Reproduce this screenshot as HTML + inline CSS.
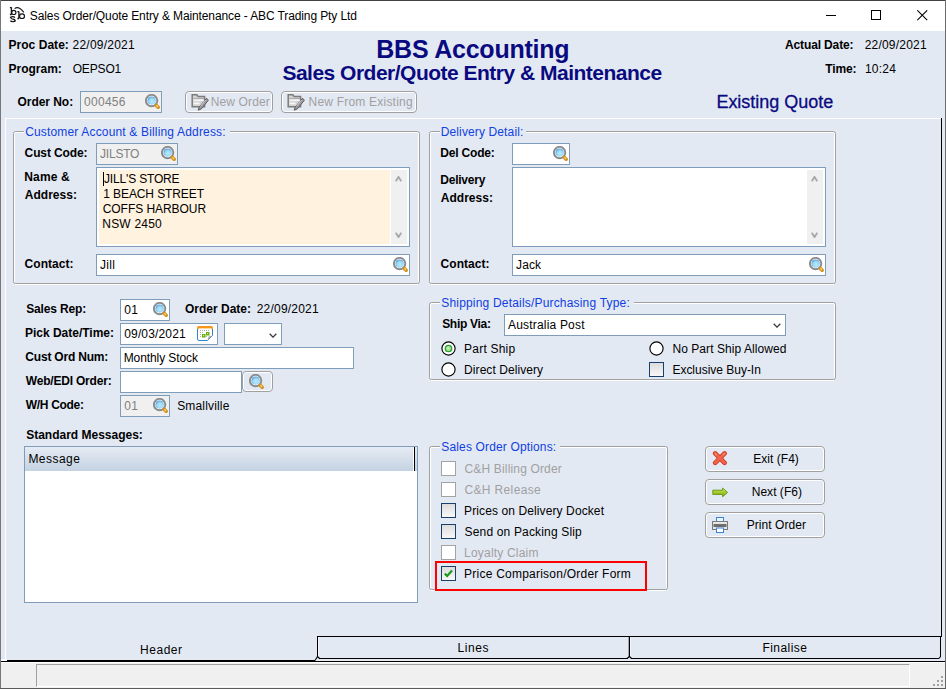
<!DOCTYPE html><html><head><meta charset="utf-8"><style>
html,body{margin:0;padding:0;width:946px;height:689px;overflow:hidden;background:#e3e9f3}
body{position:relative;font-family:"Liberation Sans",sans-serif}
div,span,svg{position:absolute}
.t{white-space:nowrap;line-height:20px}
</style></head><body>
<svg width="0" height="0" style="left:0;top:0"><defs>
<radialGradient id="mg" cx="0.55" cy="0.6" r="0.65"><stop offset="0" stop-color="#b8ecfc"/><stop offset="0.55" stop-color="#9ad8f6"/><stop offset="1" stop-color="#3d92dc"/></radialGradient>
<radialGradient id="rg" cx="0.45" cy="0.45" r="0.6"><stop offset="0" stop-color="#d8f0d0"/><stop offset="1" stop-color="#7ccc70"/></radialGradient>
<g id="mag">
<circle cx="6.6" cy="6.6" r="5.7" fill="#fff" stroke="#8a8a8a" stroke-width="1.9"/>
<circle cx="6.6" cy="6.6" r="4.1" fill="url(#mg)"/>
<path d="M11.4 11.4 L13.2 13.2" stroke="#d4901e" stroke-width="3.6" stroke-linecap="round"/>
<path d="M11.8 11.8 L12.6 12.6" stroke="#ffd86a" stroke-width="1.4" stroke-linecap="round"/>
</g>
</defs></svg>

<div style="left:0px;top:0px;width:946px;height:31px;background:#fff"></div>
<div style="left:0px;top:0px;width:946px;height:1px;background:#424242"></div>
<div style="left:0px;top:0px;width:1px;height:689px;background:#787878"></div>
<div style="left:945px;top:0px;width:1px;height:689px;background:#6a6a6a"></div>
<div style="left:0px;top:688px;width:946px;height:1px;background:#5a5a5a"></div>
<span class="t" style="left:29.86px;top:6px;font-size:12px;font-weight:normal;color:#000;letter-spacing:-0.112px;">Sales Order/Quote Entry &amp; Maintenance - ABC Trading Pty Ltd</span>
<div style="left:826px;top:15px;width:10px;height:1px;background:#000"></div>
<div style="left:871px;top:10px;width:10px;height:10px;border:1px solid #000;box-sizing:border-box"></div>
<svg style="left:917px;top:10px" width="11" height="11"><path d="M0.3 0.3 L10.2 10.2 M10.2 0.3 L0.3 10.2" stroke="#000" stroke-width="1.05"/></svg>
<svg style="left:0px;top:0px" width="30" height="26" viewBox="0 0 30 26">
<g fill="none" stroke="#151515">
<path d="M11.4 7.3 V14.6 M9.9 7.6 H11.6 M9.9 14.5 H11.6" stroke-width="1.3"/>
<ellipse cx="13.8" cy="12.4" rx="2.1" ry="2.1" stroke-width="1.2"/>
<path d="M18.9 11.4 V18.6 M17.4 11.7 H19.1 M17.4 18.5 H19.1" stroke-width="1.3"/>
<ellipse cx="22" cy="16.2" rx="2.5" ry="2.3" stroke-width="1.2"/>
<path d="M14.6 8.6 Q18.5 5.6 23.8 12.4" stroke-width="1.1"/>
<path d="M15 17.6 Q14 16.6 12.6 16.7 Q10.6 16.9 11 18.3 Q11.5 19.1 13 19.2 Q15 19.4 15.1 20.4 Q15 21.7 12.8 21.7 Q11 21.7 10.4 20.6" stroke-width="1.2"/>
<path d="M10.4 16.6 V18 M15.1 20.2 V21.7" stroke-width="0.9"/>
</g>
</svg>
<span class="t" style="left:8.50px;top:35px;font-size:12px;font-weight:bold;color:#000;letter-spacing:0.038px;">Proc Date:</span>
<span class="t" style="left:72.60px;top:35px;font-size:12px;font-weight:normal;color:#000;letter-spacing:0.215px;">22/09/2021</span>
<span class="t" style="left:8.50px;top:59px;font-size:12px;font-weight:bold;color:#000;">Program:</span>
<span class="t" style="left:72.63px;top:59px;font-size:12px;font-weight:normal;color:#000;letter-spacing:-0.136px;">OEPSO1</span>
<span class="t" style="left:376.23px;top:39px;font-size:25px;font-weight:bold;color:#0a0a80;letter-spacing:-0.221px;">BBS Accounting</span>
<span class="t" style="left:282.40px;top:63px;font-size:21px;font-weight:bold;color:#0a0a80;letter-spacing:-0.506px;">Sales Order/Quote Entry &amp; Maintenance</span>
<span class="t" style="left:785.00px;top:35px;font-size:12px;font-weight:bold;color:#000;letter-spacing:-0.133px;">Actual Date:</span>
<span class="t" style="left:864.70px;top:35px;font-size:12px;font-weight:normal;color:#000;letter-spacing:0.203px;">22/09/2021</span>
<span class="t" style="left:825.27px;top:59px;font-size:12px;font-weight:bold;color:#000;letter-spacing:-0.129px;">Time:</span>
<span class="t" style="left:864.89px;top:59px;font-size:12px;font-weight:normal;color:#000;letter-spacing:0.259px;">10:24</span>
<span class="t" style="left:17.51px;top:92px;font-size:12px;font-weight:bold;color:#000;letter-spacing:-0.045px;">Order No:</span>
<div style="left:80px;top:91px;width:82px;height:22px;background:#f0f0f0;border:1px solid #7f9db9;box-sizing:border-box"></div>
<span class="t" style="left:83.93px;top:92px;font-size:12px;font-weight:normal;color:#808080;letter-spacing:0.311px;">000456</span>
<svg style="left:145px;top:94px" width="16" height="16"><use href="#mag"/></svg>
<div style="left:185px;top:91px;width:88px;height:22px;border:1px solid #a0a0a0;border-radius:4px;box-sizing:border-box;box-shadow:inset 0 0 0 1px #fff"></div>
<span class="t" style="left:210.72px;top:92px;font-size:12px;font-weight:normal;color:#a0a0a0;letter-spacing:0.134px;">New Order</span>
<div style="left:281px;top:91px;width:136px;height:22px;border:1px solid #a0a0a0;border-radius:4px;box-sizing:border-box;box-shadow:inset 0 0 0 1px #fff"></div>
<span class="t" style="left:308.52px;top:92px;font-size:12px;font-weight:normal;color:#a0a0a0;letter-spacing:0.211px;">New From Existing</span>
<span class="t" style="left:716.42px;top:92px;font-size:18px;font-weight:normal;color:#0a0a80;letter-spacing:-0.022px;-webkit-text-stroke:0.3px #0a0a80">Existing Quote</span>
<div style="left:5px;top:118px;width:936px;height:1px;background:#fff"></div>
<div style="left:5px;top:118px;width:1px;height:542px;background:#fff"></div>
<div style="left:941px;top:118px;width:1px;height:519px;background:#000"></div>
<div style="left:15px;top:132px;width:403px;height:1px;background:#fff"></div>
<div style="left:14px;top:133px;width:1px;height:149px;background:#fff"></div>
<div style="left:418px;top:133px;width:1px;height:149px;background:#fff"></div>
<div style="left:15px;top:284px;width:403px;height:1px;background:#fff"></div>
<div style="left:13px;top:131px;width:407px;height:153px;border:1px solid #a0a0a0;border-radius:2.5px;box-sizing:border-box"></div>
<div style="left:24px;top:129px;width:206px;height:5px;background:#e3e9f3"></div>
<span class="t" style="left:25.19px;top:122px;font-size:12px;font-weight:normal;color:#1040e0;letter-spacing:0.165px;">Customer Account &amp; Billing Address:</span>
<span class="t" style="left:24.61px;top:143px;font-size:12px;font-weight:bold;color:#000;letter-spacing:-0.128px;">Cust Code:</span>
<div style="left:96px;top:143px;width:82px;height:22px;background:#f0f0f0;border:1px solid #7f9db9;box-sizing:border-box"></div>
<span class="t" style="left:100.01px;top:144px;font-size:12px;font-weight:normal;color:#808080;letter-spacing:-0.203px;">JILSTO</span>
<svg style="left:161px;top:146px" width="16" height="16"><use href="#mag"/></svg>
<span class="t" style="left:24.30px;top:167px;font-size:12px;font-weight:bold;color:#000;letter-spacing:0.139px;">Name &amp;</span>
<span class="t" style="left:24.80px;top:185px;font-size:12px;font-weight:bold;color:#000;letter-spacing:0.020px;">Address:</span>
<div style="left:96px;top:167px;width:314px;height:80px;background:#fff;border:1px solid #7f9db9;box-sizing:border-box"></div>
<div style="left:99px;top:170px;width:291px;height:74px;background:#fff2de"></div>
<div style="left:391px;top:170px;width:16px;height:74px;background:#f0f0f0"></div>
<span class="t" style="left:104.01px;top:169px;font-size:12px;font-weight:normal;color:#000;letter-spacing:-0.168px;">JILL'S STORE</span>
<span class="t" style="left:103.29px;top:184px;font-size:12px;font-weight:normal;color:#000;letter-spacing:-0.103px;">1 BEACH STREET</span>
<span class="t" style="left:102.69px;top:199px;font-size:12px;font-weight:normal;color:#000;letter-spacing:-0.045px;">COFFS HARBOUR</span>
<span class="t" style="left:102.32px;top:214px;font-size:12px;font-weight:normal;color:#000;letter-spacing:0.190px;">NSW 2450</span>
<span class="t" style="left:24.61px;top:254px;font-size:12px;font-weight:bold;color:#000;letter-spacing:0.026px;">Contact:</span>
<div style="left:96px;top:254px;width:314px;height:22px;background:#fff;border:1px solid #7f9db9;box-sizing:border-box"></div>
<span class="t" style="left:100.01px;top:255px;font-size:12px;font-weight:normal;color:#000;letter-spacing:0.331px;">Jill</span>
<svg style="left:393px;top:257px" width="16" height="16"><use href="#mag"/></svg>
<div style="left:431px;top:132px;width:403px;height:1px;background:#fff"></div>
<div style="left:430px;top:133px;width:1px;height:149px;background:#fff"></div>
<div style="left:834px;top:133px;width:1px;height:149px;background:#fff"></div>
<div style="left:431px;top:284px;width:403px;height:1px;background:#fff"></div>
<div style="left:429px;top:131px;width:407px;height:153px;border:1px solid #a0a0a0;border-radius:2.5px;box-sizing:border-box"></div>
<div style="left:440px;top:129px;width:86px;height:5px;background:#e3e9f3"></div>
<span class="t" style="left:440.72px;top:122px;font-size:12px;font-weight:normal;color:#1040e0;letter-spacing:0.126px;">Delivery Detail:</span>
<span class="t" style="left:440.30px;top:143px;font-size:12px;font-weight:bold;color:#000;letter-spacing:-0.181px;">Del Code:</span>
<div style="left:512px;top:143px;width:58px;height:22px;background:#fff;border:1px solid #7f9db9;box-sizing:border-box"></div>
<svg style="left:553px;top:146px" width="16" height="16"><use href="#mag"/></svg>
<span class="t" style="left:440.30px;top:170px;font-size:12px;font-weight:bold;color:#000;letter-spacing:-0.233px;">Delivery</span>
<span class="t" style="left:440.80px;top:188px;font-size:12px;font-weight:bold;color:#000;letter-spacing:0.020px;">Address:</span>
<div style="left:512px;top:167px;width:314px;height:80px;background:#fff;border:1px solid #7f9db9;box-sizing:border-box"></div>
<div style="left:807px;top:170px;width:16px;height:74px;background:#f0f0f0"></div>
<span class="t" style="left:440.61px;top:254px;font-size:12px;font-weight:bold;color:#000;letter-spacing:0.026px;">Contact:</span>
<div style="left:512px;top:254px;width:314px;height:22px;background:#fff;border:1px solid #7f9db9;box-sizing:border-box"></div>
<span class="t" style="left:516.01px;top:255px;font-size:12px;font-weight:normal;color:#000;letter-spacing:0.132px;">Jack</span>
<svg style="left:809px;top:257px" width="16" height="16"><use href="#mag"/></svg>
<span class="t" style="left:26.15px;top:299px;font-size:12px;font-weight:bold;color:#000;letter-spacing:-0.140px;">Sales Rep:</span>
<div style="left:120px;top:299px;width:50px;height:22px;background:#fff;border:1px solid #7f9db9;box-sizing:border-box"></div>
<span class="t" style="left:124.23px;top:300px;font-size:12px;font-weight:normal;color:#000;letter-spacing:0.326px;">01</span>
<svg style="left:153px;top:302px" width="16" height="16"><use href="#mag"/></svg>
<span class="t" style="left:184.91px;top:299px;font-size:12px;font-weight:bold;color:#000;letter-spacing:0.013px;">Order Date:</span>
<span class="t" style="left:256.70px;top:299px;font-size:12px;font-weight:normal;color:#000;letter-spacing:0.215px;">22/09/2021</span>
<span class="t" style="left:25.00px;top:323px;font-size:12px;font-weight:bold;color:#000;letter-spacing:-0.015px;">Pick Date/Time:</span>
<div style="left:120px;top:323px;width:98px;height:22px;background:#fff;border:1px solid #7f9db9;box-sizing:border-box"></div>
<span class="t" style="left:124.23px;top:324px;font-size:12px;font-weight:normal;color:#000;letter-spacing:0.155px;">09/03/2021</span>
<div style="left:224px;top:323px;width:58px;height:22px;background:#fff;border:1px solid #7f9db9;box-sizing:border-box"></div>
<span class="t" style="left:25.31px;top:347px;font-size:12px;font-weight:bold;color:#000;letter-spacing:-0.190px;">Cust Ord Num:</span>
<div style="left:120px;top:347px;width:234px;height:22px;background:#fff;border:1px solid #7f9db9;box-sizing:border-box"></div>
<span class="t" style="left:123.72px;top:348px;font-size:12px;font-weight:normal;color:#000;letter-spacing:-0.100px;">Monthly Stock</span>
<span class="t" style="left:25.79px;top:371px;font-size:12px;font-weight:bold;color:#000;letter-spacing:-0.201px;">Web/EDI Order:</span>
<div style="left:120px;top:371px;width:122px;height:22px;background:#fff;border:1px solid #7f9db9;box-sizing:border-box"></div>
<div style="left:242px;top:371px;width:31px;height:21px;border:1px solid #a0a0a0;border-radius:4px;box-sizing:border-box;box-shadow:inset 0 0 0 1px #fff"></div>
<svg style="left:249px;top:374px" width="16" height="16"><use href="#mag"/></svg>
<span class="t" style="left:25.79px;top:395px;font-size:12px;font-weight:bold;color:#000;letter-spacing:-0.311px;">W/H Code:</span>
<div style="left:120px;top:395px;width:50px;height:22px;background:#f0f0f0;border:1px solid #7f9db9;box-sizing:border-box"></div>
<span class="t" style="left:124.23px;top:396px;font-size:12px;font-weight:normal;color:#808080;letter-spacing:0.326px;">01</span>
<svg style="left:153px;top:398px" width="16" height="16"><use href="#mag"/></svg>
<span class="t" style="left:177.16px;top:396px;font-size:12px;font-weight:normal;color:#000;letter-spacing:0.167px;">Smallville</span>
<span class="t" style="left:26.15px;top:425px;font-size:12px;font-weight:bold;color:#000;">Standard Messages:</span>
<div style="left:24px;top:446px;width:394px;height:157px;background:#fff;border:1px solid #7f9db9;box-sizing:border-box"></div>
<div style="left:25px;top:447px;width:392px;height:24px;background:linear-gradient(#e6ecf4,#c4d2e2)"></div>
<div style="left:413px;top:447px;width:1px;height:24px;background:#fff"></div>
<div style="left:414px;top:447px;width:1px;height:24px;background:#000"></div>
<span class="t" style="left:28.42px;top:449px;font-size:12px;font-weight:normal;color:#000;letter-spacing:0.454px;">Message</span>
<div style="left:431px;top:303px;width:403px;height:1px;background:#fff"></div>
<div style="left:430px;top:304px;width:1px;height:74px;background:#fff"></div>
<div style="left:834px;top:304px;width:1px;height:74px;background:#fff"></div>
<div style="left:431px;top:380px;width:403px;height:1px;background:#fff"></div>
<div style="left:429px;top:302px;width:407px;height:78px;border:1px solid #a0a0a0;border-radius:2.5px;box-sizing:border-box"></div>
<div style="left:440px;top:300px;width:194px;height:5px;background:#e3e9f3"></div>
<span class="t" style="left:441.26px;top:293px;font-size:12px;font-weight:normal;color:#1040e0;letter-spacing:0.185px;">Shipping Details/Purchasing Type:</span>
<span class="t" style="left:442.15px;top:314px;font-size:12px;font-weight:bold;color:#000;letter-spacing:-0.292px;">Ship Via:</span>
<div style="left:504px;top:314px;width:282px;height:22px;background:#fff;border:1px solid #7f9db9;box-sizing:border-box"></div>
<span class="t" style="left:508.08px;top:315px;font-size:12px;font-weight:normal;color:#000;letter-spacing:0.183px;">Australia Post</span>
<div style="left:431px;top:447px;width:235px;height:1px;background:#fff"></div>
<div style="left:430px;top:448px;width:1px;height:140px;background:#fff"></div>
<div style="left:666px;top:448px;width:1px;height:140px;background:#fff"></div>
<div style="left:431px;top:590px;width:235px;height:1px;background:#fff"></div>
<div style="left:429px;top:446px;width:239px;height:144px;border:1px solid #a0a0a0;border-radius:2.5px;box-sizing:border-box"></div>
<div style="left:440px;top:444px;width:120px;height:5px;background:#e3e9f3"></div>
<span class="t" style="left:441.26px;top:437px;font-size:12px;font-weight:normal;color:#1040e0;letter-spacing:0.152px;">Sales Order Options:</span>
<div style="left:705px;top:446px;width:120px;height:26px;border:1px solid #a0a0a0;border-radius:4px;box-sizing:border-box;box-shadow:inset 0 0 0 1px #fff"></div>
<span class="t" style="left:753.32px;top:449px;font-size:12px;font-weight:normal;color:#000;letter-spacing:0.024px;">Exit (F4)</span>
<div style="left:705px;top:479px;width:120px;height:26px;border:1px solid #a0a0a0;border-radius:4px;box-sizing:border-box;box-shadow:inset 0 0 0 1px #fff"></div>
<span class="t" style="left:751.72px;top:482px;font-size:12px;font-weight:normal;color:#000;letter-spacing:0.028px;">Next (F6)</span>
<div style="left:705px;top:512px;width:120px;height:26px;border:1px solid #a0a0a0;border-radius:4px;box-sizing:border-box;box-shadow:inset 0 0 0 1px #fff"></div>
<span class="t" style="left:746.72px;top:515px;font-size:12px;font-weight:normal;color:#000;letter-spacing:0.050px;">Print Order</span>
<svg style="left:441px;top:341px" width="15" height="15"><circle cx="7.5" cy="7.5" r="6.6" fill="#fff" stroke="#000" stroke-width="1.15"/><circle cx="7.5" cy="7.5" r="3.2" fill="url(#rg)" stroke="#2ca52c" stroke-width="1.3"/></svg>
<span class="t" style="left:464.12px;top:339px;font-size:12px;font-weight:normal;color:#000;letter-spacing:0.204px;">Part Ship</span>
<svg style="left:441px;top:362px" width="15" height="15"><circle cx="7.5" cy="7.5" r="6.6" fill="#fff" stroke="#000" stroke-width="1.15"/></svg>
<span class="t" style="left:464.12px;top:360px;font-size:12px;font-weight:normal;color:#000;letter-spacing:0.064px;">Direct Delivery</span>
<svg style="left:649px;top:341px" width="15" height="15"><circle cx="7.5" cy="7.5" r="6.6" fill="#fff" stroke="#000" stroke-width="1.15"/></svg>
<span class="t" style="left:672.42px;top:339px;font-size:12px;font-weight:normal;color:#000;letter-spacing:0.067px;">No Part Ship Allowed</span>
<div style="left:649px;top:362px;width:15px;height:15px;background:linear-gradient(#dcdcdc,#f8f8f8);border:1px solid #17406f;box-sizing:border-box"></div>
<span class="t" style="left:672.42px;top:360px;font-size:12px;font-weight:normal;color:#000;letter-spacing:-0.016px;">Exclusive Buy-In</span>
<div style="left:441px;top:461px;width:15px;height:15px;background:#fff;border:1px solid #a3a3a3;box-sizing:border-box"></div>
<span class="t" style="left:464.49px;top:459px;font-size:12px;font-weight:normal;color:#a0a0a0;letter-spacing:0.163px;">C&amp;H Billing Order</span>
<div style="left:441px;top:482px;width:15px;height:15px;background:#fff;border:1px solid #a3a3a3;box-sizing:border-box"></div>
<span class="t" style="left:464.49px;top:480px;font-size:12px;font-weight:normal;color:#a0a0a0;letter-spacing:0.355px;">C&amp;H Release</span>
<div style="left:441px;top:503px;width:15px;height:15px;background:linear-gradient(#dcdcdc,#f8f8f8);border:1px solid #17406f;box-sizing:border-box"></div>
<span class="t" style="left:464.12px;top:501px;font-size:12px;font-weight:normal;color:#000;letter-spacing:0.104px;">Prices on Delivery Docket</span>
<div style="left:441px;top:524px;width:15px;height:15px;background:linear-gradient(#dcdcdc,#f8f8f8);border:1px solid #17406f;box-sizing:border-box"></div>
<span class="t" style="left:464.56px;top:522px;font-size:12px;font-weight:normal;color:#000;letter-spacing:0.167px;">Send on Packing Slip</span>
<div style="left:441px;top:545px;width:15px;height:15px;background:#fff;border:1px solid #a3a3a3;box-sizing:border-box"></div>
<span class="t" style="left:464.12px;top:543px;font-size:12px;font-weight:normal;color:#a0a0a0;letter-spacing:0.188px;">Loyalty Claim</span>
<div style="left:441px;top:566px;width:15px;height:15px;background:linear-gradient(#dcdcdc,#f8f8f8);border:1px solid #17406f;box-sizing:border-box"></div>
<svg style="left:441px;top:566px" width="15" height="15"><path d="M3.8 7.6 L6.2 10 L11 4.6" fill="none" stroke="#1a9a1a" stroke-width="2.2"/></svg>
<span class="t" style="left:464.12px;top:564px;font-size:12px;font-weight:normal;color:#000;letter-spacing:0.230px;">Price Comparison/Order Form</span>
<div style="left:435px;top:561px;width:212px;height:30px;border:2px solid #f00;box-sizing:border-box"></div>
<svg style="left:773px;top:323px" width="8" height="5"><path d="M0.7 0.7 L4.0 4.1 L7.3 0.7" fill="none" stroke="#3a3a3a" stroke-width="1.3"/></svg>
<svg style="left:269px;top:333px" width="8" height="5"><path d="M0.7 0.7 L4.0 4.1 L7.3 0.7" fill="none" stroke="#3a3a3a" stroke-width="1.3"/></svg>
<svg style="left:395px;top:176px" width="7" height="6"><path d="M0.7 5.3 L3.5 0.9 L6.3 5.3" fill="none" stroke="#a8a8a8" stroke-width="1.9"/></svg>
<svg style="left:395px;top:232px" width="7" height="6"><path d="M0.7 0.7 L3.5 5.1 L6.3 0.7" fill="none" stroke="#a8a8a8" stroke-width="1.9"/></svg>
<svg style="left:811px;top:176px" width="7" height="6"><path d="M0.7 5.3 L3.5 0.9 L6.3 5.3" fill="none" stroke="#a8a8a8" stroke-width="1.9"/></svg>
<svg style="left:811px;top:232px" width="7" height="6"><path d="M0.7 0.7 L3.5 5.1 L6.3 0.7" fill="none" stroke="#a8a8a8" stroke-width="1.9"/></svg>
<svg style="left:196px;top:325px" width="18" height="17" viewBox="0 0 18 17">
<path d="M1.5 3 V14 Q1.5 15.5 3 15.5 H11.5 L16.5 10.5 V3" fill="#fff" stroke="#2f86c6" stroke-width="1"/>
<path d="M11.5 15.5 L16.5 10.5 L12.5 11.5 Z" fill="#a8a8a8"/>
<path d="M1 4 V2.6 Q1 1 2.6 1 H15.4 Q17 1 17 2.6 V4 Z" fill="#f7951c"/>
<rect x="2.5" y="3" width="13" height="1" fill="#fcd9a8"/>
<g fill="#b0b0b0"><rect x="4" y="5" width="1" height="1"/><rect x="6" y="5" width="1" height="1"/><rect x="8" y="5" width="1" height="1"/><rect x="10" y="5" width="1" height="1"/><rect x="12" y="5" width="1" height="1"/>
<rect x="4" y="7" width="1" height="1"/><rect x="6" y="7" width="1" height="1"/><rect x="12" y="7" width="1" height="1"/>
<rect x="4" y="9" width="1" height="1"/><rect x="12" y="9" width="1" height="1"/>
<rect x="4" y="11" width="1" height="1"/><rect x="8" y="11" width="1" height="1"/><rect x="10" y="11" width="1" height="1"/></g>
<rect x="6" y="9" width="3.5" height="3.5" fill="#6aaa10"/><rect x="10" y="7" width="3.5" height="3.5" fill="#6aaa10"/>
<rect x="7" y="10" width="1.2" height="1.2" fill="#c8f080"/><rect x="11" y="8" width="1.2" height="1.2" fill="#c8f080"/>
</svg>
<svg style="left:191px;top:94px" width="18" height="17" viewBox="0 0 18 17">
<path d="M1.2 0.8 L5.8 0.8 L7.2 2.6 L13.6 2.6 L13.6 12.8 L1.2 12.8 Z" fill="#d4d4d4" stroke="#7c7c7c" stroke-width="1.5"/>
<path d="M2.6 6.2 L13 6.2 M2.6 9.4 L8.5 9.4" stroke="#f6f6f6" stroke-width="1.6"/>
<path d="M2.6 4.4 L13 4.4" stroke="#9a9a9a" stroke-width="0.8"/>
<path d="M15.6 4.2 L8.2 13.2 L7.2 16.2 L10.2 15 L17.4 6.2 Z" fill="#9a9a9a" stroke="#5e5e5e" stroke-width="1"/>
<path d="M14.6 6 L9.4 12.4" stroke="#d8d8d8" stroke-width="0.9"/>
</svg>
<svg style="left:287px;top:94px" width="18" height="17" viewBox="0 0 18 17">
<path d="M1.2 0.8 L5.8 0.8 L7.2 2.6 L13.6 2.6 L13.6 12.8 L1.2 12.8 Z" fill="#d4d4d4" stroke="#7c7c7c" stroke-width="1.5"/>
<path d="M2.6 6.2 L13 6.2 M2.6 9.4 L8.5 9.4" stroke="#f6f6f6" stroke-width="1.6"/>
<path d="M2.6 4.4 L13 4.4" stroke="#9a9a9a" stroke-width="0.8"/>
<path d="M15.6 4.2 L8.2 13.2 L7.2 16.2 L10.2 15 L17.4 6.2 Z" fill="#9a9a9a" stroke="#5e5e5e" stroke-width="1"/>
<path d="M14.6 6 L9.4 12.4" stroke="#d8d8d8" stroke-width="0.9"/>
</svg>
<svg style="left:712px;top:450px" width="16" height="16" viewBox="0 0 16 16">
<path d="M3.2 3.4 L12.6 12.8 M12.6 3.4 L3.2 12.8" stroke="#d23a22" stroke-width="4.6" stroke-linecap="round"/>
<path d="M3.2 3.4 L12.6 12.8 M12.6 3.4 L3.2 12.8" stroke="#f0644c" stroke-width="2.8" stroke-linecap="round"/>
<path d="M3 3.2 L4.6 4.8 M12.8 3.2 L11.2 4.8" stroke="#ffb0a0" stroke-width="0.9" stroke-linecap="round"/>
</svg>
<svg style="left:712px;top:487px" width="17" height="11" viewBox="0 0 17 11">
<defs><linearGradient id="ag" x1="0" y1="0" x2="0" y2="1"><stop offset="0" stop-color="#d6ec50"/><stop offset="1" stop-color="#74a80c"/></linearGradient></defs>
<path d="M0.8 3.2 L10.6 3.2 L10.6 1 L15.6 5.4 L10.6 9.8 L10.6 7.4 L0.8 7.4 Z" fill="url(#ag)" stroke="#5f9410" stroke-width="0.9" stroke-linejoin="round"/>
</svg>
<svg style="left:712px;top:516px" width="16" height="18" viewBox="0 0 16 18">
<rect x="4.5" y="1.5" width="7" height="5" fill="#e8f4ff" stroke="#3a86d0" stroke-width="1"/>
<rect x="0.5" y="5.5" width="15" height="8" fill="#e6e6e6" stroke="#7a7a7a" stroke-width="1"/>
<rect x="1.5" y="8" width="13" height="3" fill="#6e6e6e"/>
<rect x="4.5" y="12" width="7" height="4.5" fill="#fff" stroke="#3a86d0" stroke-width="1"/>
</svg>
<div style="left:103px;top:172px;width:1px;height:14px;background:#000"></div>
<div style="left:317px;top:636px;width:624px;height:1px;background:#000"></div>
<div style="left:317px;top:636px;width:1px;height:21px;background:#000"></div>
<div style="left:629px;top:636px;width:1px;height:21px;background:#000"></div>
<div style="left:940px;top:636px;width:1px;height:21px;background:#000"></div>
<div style="left:319px;top:658px;width:309px;height:1px;background:#000"></div>
<div style="left:631px;top:658px;width:308px;height:1px;background:#000"></div>
<div style="left:1px;top:659px;width:6px;height:2px;background:#f8fbff"></div>
<div style="left:7px;top:660px;width:308px;height:1px;background:#000"></div>
<div style="left:1px;top:661px;width:316px;height:1px;background:#000"></div>
<div style="left:317px;top:661px;width:628px;height:1px;background:#000"></div>
<div style="left:318px;top:637px;width:1px;height:20px;background:#f4f7fb"></div>
<div style="left:630px;top:637px;width:1px;height:20px;background:#f4f7fb"></div>
<div style="left:628px;top:637px;width:1px;height:20px;background:#a8a8a8"></div>
<svg style="left:310px;top:650px" width="640" height="14"><g fill="none" stroke="#000" stroke-width="1.1">
<path d="M7.5 6.5 L5 10.5 M7.5 6.5 L9.5 8.5"/>
<path d="M319.5 6.5 L317 8.5 M319.5 6.5 L321.5 8.5"/>
<path d="M630.5 6.5 L629 8.5"/>
</g></svg>
<span class="t" style="left:140.12px;top:640px;font-size:12px;font-weight:normal;color:#000;letter-spacing:0.505px;">Header</span>
<span class="t" style="left:457.52px;top:638px;font-size:12px;font-weight:normal;color:#000;letter-spacing:0.558px;">Lines</span>
<span class="t" style="left:762.52px;top:638px;font-size:12px;font-weight:normal;color:#000;letter-spacing:0.424px;">Finalise</span>
<div style="left:1px;top:662px;width:944px;height:26px;background:#f0f0f0"></div>
<div style="left:1px;top:662px;width:944px;height:1px;background:#fff"></div>
<div style="left:36px;top:664px;width:874px;height:23px;border-top:1px solid #a0a0a0;border-left:1px solid #a0a0a0;border-right:1px solid #fff;border-bottom:1px solid #fff;box-sizing:border-box"></div>
<div style="left:941px;top:676px;width:2px;height:2px;background:#a0a0a0"></div>
<div style="left:937px;top:680px;width:2px;height:2px;background:#a0a0a0"></div>
<div style="left:941px;top:680px;width:2px;height:2px;background:#a0a0a0"></div>
<div style="left:933px;top:684px;width:2px;height:2px;background:#a0a0a0"></div>
<div style="left:937px;top:684px;width:2px;height:2px;background:#a0a0a0"></div>
<div style="left:941px;top:684px;width:2px;height:2px;background:#a0a0a0"></div>
</body></html>
